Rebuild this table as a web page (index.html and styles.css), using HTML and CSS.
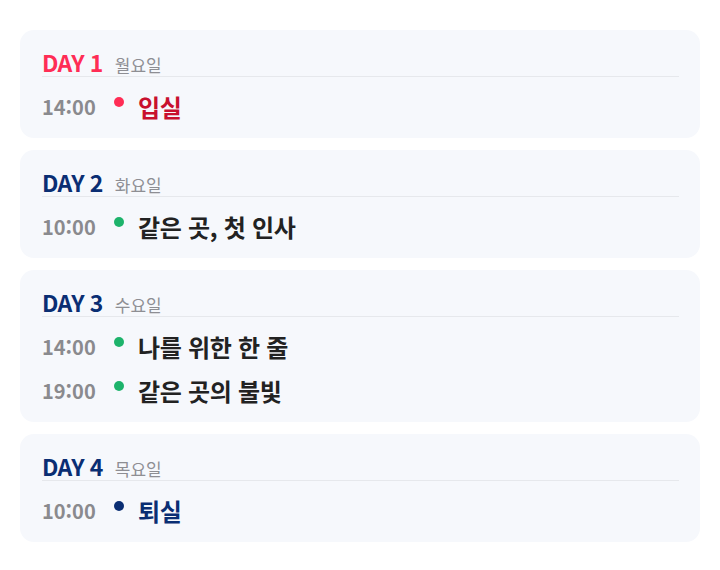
FILE: index.html
```html
<!DOCTYPE html>
<html lang="ko">
<head>
<meta charset="utf-8">
<link rel="stylesheet" href="styles.css">
</head>
<body>
<div class="list">
  <section class="card">
    <div class="head"><span class="day red">DAY 1</span><span class="wd">월요일</span></div>
    <div class="rows">
      <div class="row"><span class="time">14:00</span><span class="dot red-bg"></span><span class="title red-dark">입실</span></div>
    </div>
  </section>
  <section class="card">
    <div class="head"><span class="day navy">DAY 2</span><span class="wd">화요일</span></div>
    <div class="rows">
      <div class="row"><span class="time">10:00</span><span class="dot green-bg"></span><span class="title">같은 곳, 첫 인사</span></div>
    </div>
  </section>
  <section class="card">
    <div class="head"><span class="day navy">DAY 3</span><span class="wd">수요일</span></div>
    <div class="rows">
      <div class="row"><span class="time">14:00</span><span class="dot green-bg"></span><span class="title">나를 위한 한 줄</span></div>
      <div class="row"><span class="time">19:00</span><span class="dot green-bg"></span><span class="title">같은 곳의 불빛</span></div>
    </div>
  </section>
  <section class="card">
    <div class="head"><span class="day navy">DAY 4</span><span class="wd">목요일</span></div>
    <div class="rows">
      <div class="row"><span class="time">10:00</span><span class="dot navy-bg"></span><span class="title navy">퇴실</span></div>
    </div>
  </section>
</div>
</body>
</html>
```
FILE: styles.css
```css
html, body { margin: 0; padding: 0; background: #fff; }
body {
  font-family: "Noto Sans CJK KR", "Noto Sans", sans-serif;
  padding: 30px 20px 0 20px;
}
.list { display: flex; flex-direction: column; gap: 12px; }
.card {
  background: #f6f8fc;
  border-radius: 14px;
  padding: 18px 21px 10px 22px;
}
.head {
  display: flex;
  align-items: baseline;
  gap: 12px;
  border-bottom: 1px solid #e6e8ec;
  height: 28px;
  line-height: 28px;
}
.day { font-size: 23px; font-weight: 700; letter-spacing: -0.6px; }
.wd { font-size: 17px; color: #8e8e93; font-weight: 400; }
.rows { margin-top: 7px; }
.row {
  display: flex;
  align-items: center;
  height: 44px;
}
.time { width: 72px; font-size: 20px; font-weight: 700; color: #8a8a8e; }
.dot { width: 10px; height: 10px; border-radius: 50%; margin-right: 14px; position: relative; top: -4px; }
.title { font-size: 24px; font-weight: 700; color: #222; letter-spacing: -0.3px; }
.red { color: #ff2d55; }
.red-dark { color: #c8102e; }
.navy { color: #0a2e73; }
.red-bg { background: #ff2d55; }
.green-bg { background: #1db36b; }
.navy-bg { background: #0a2e73; }
```
